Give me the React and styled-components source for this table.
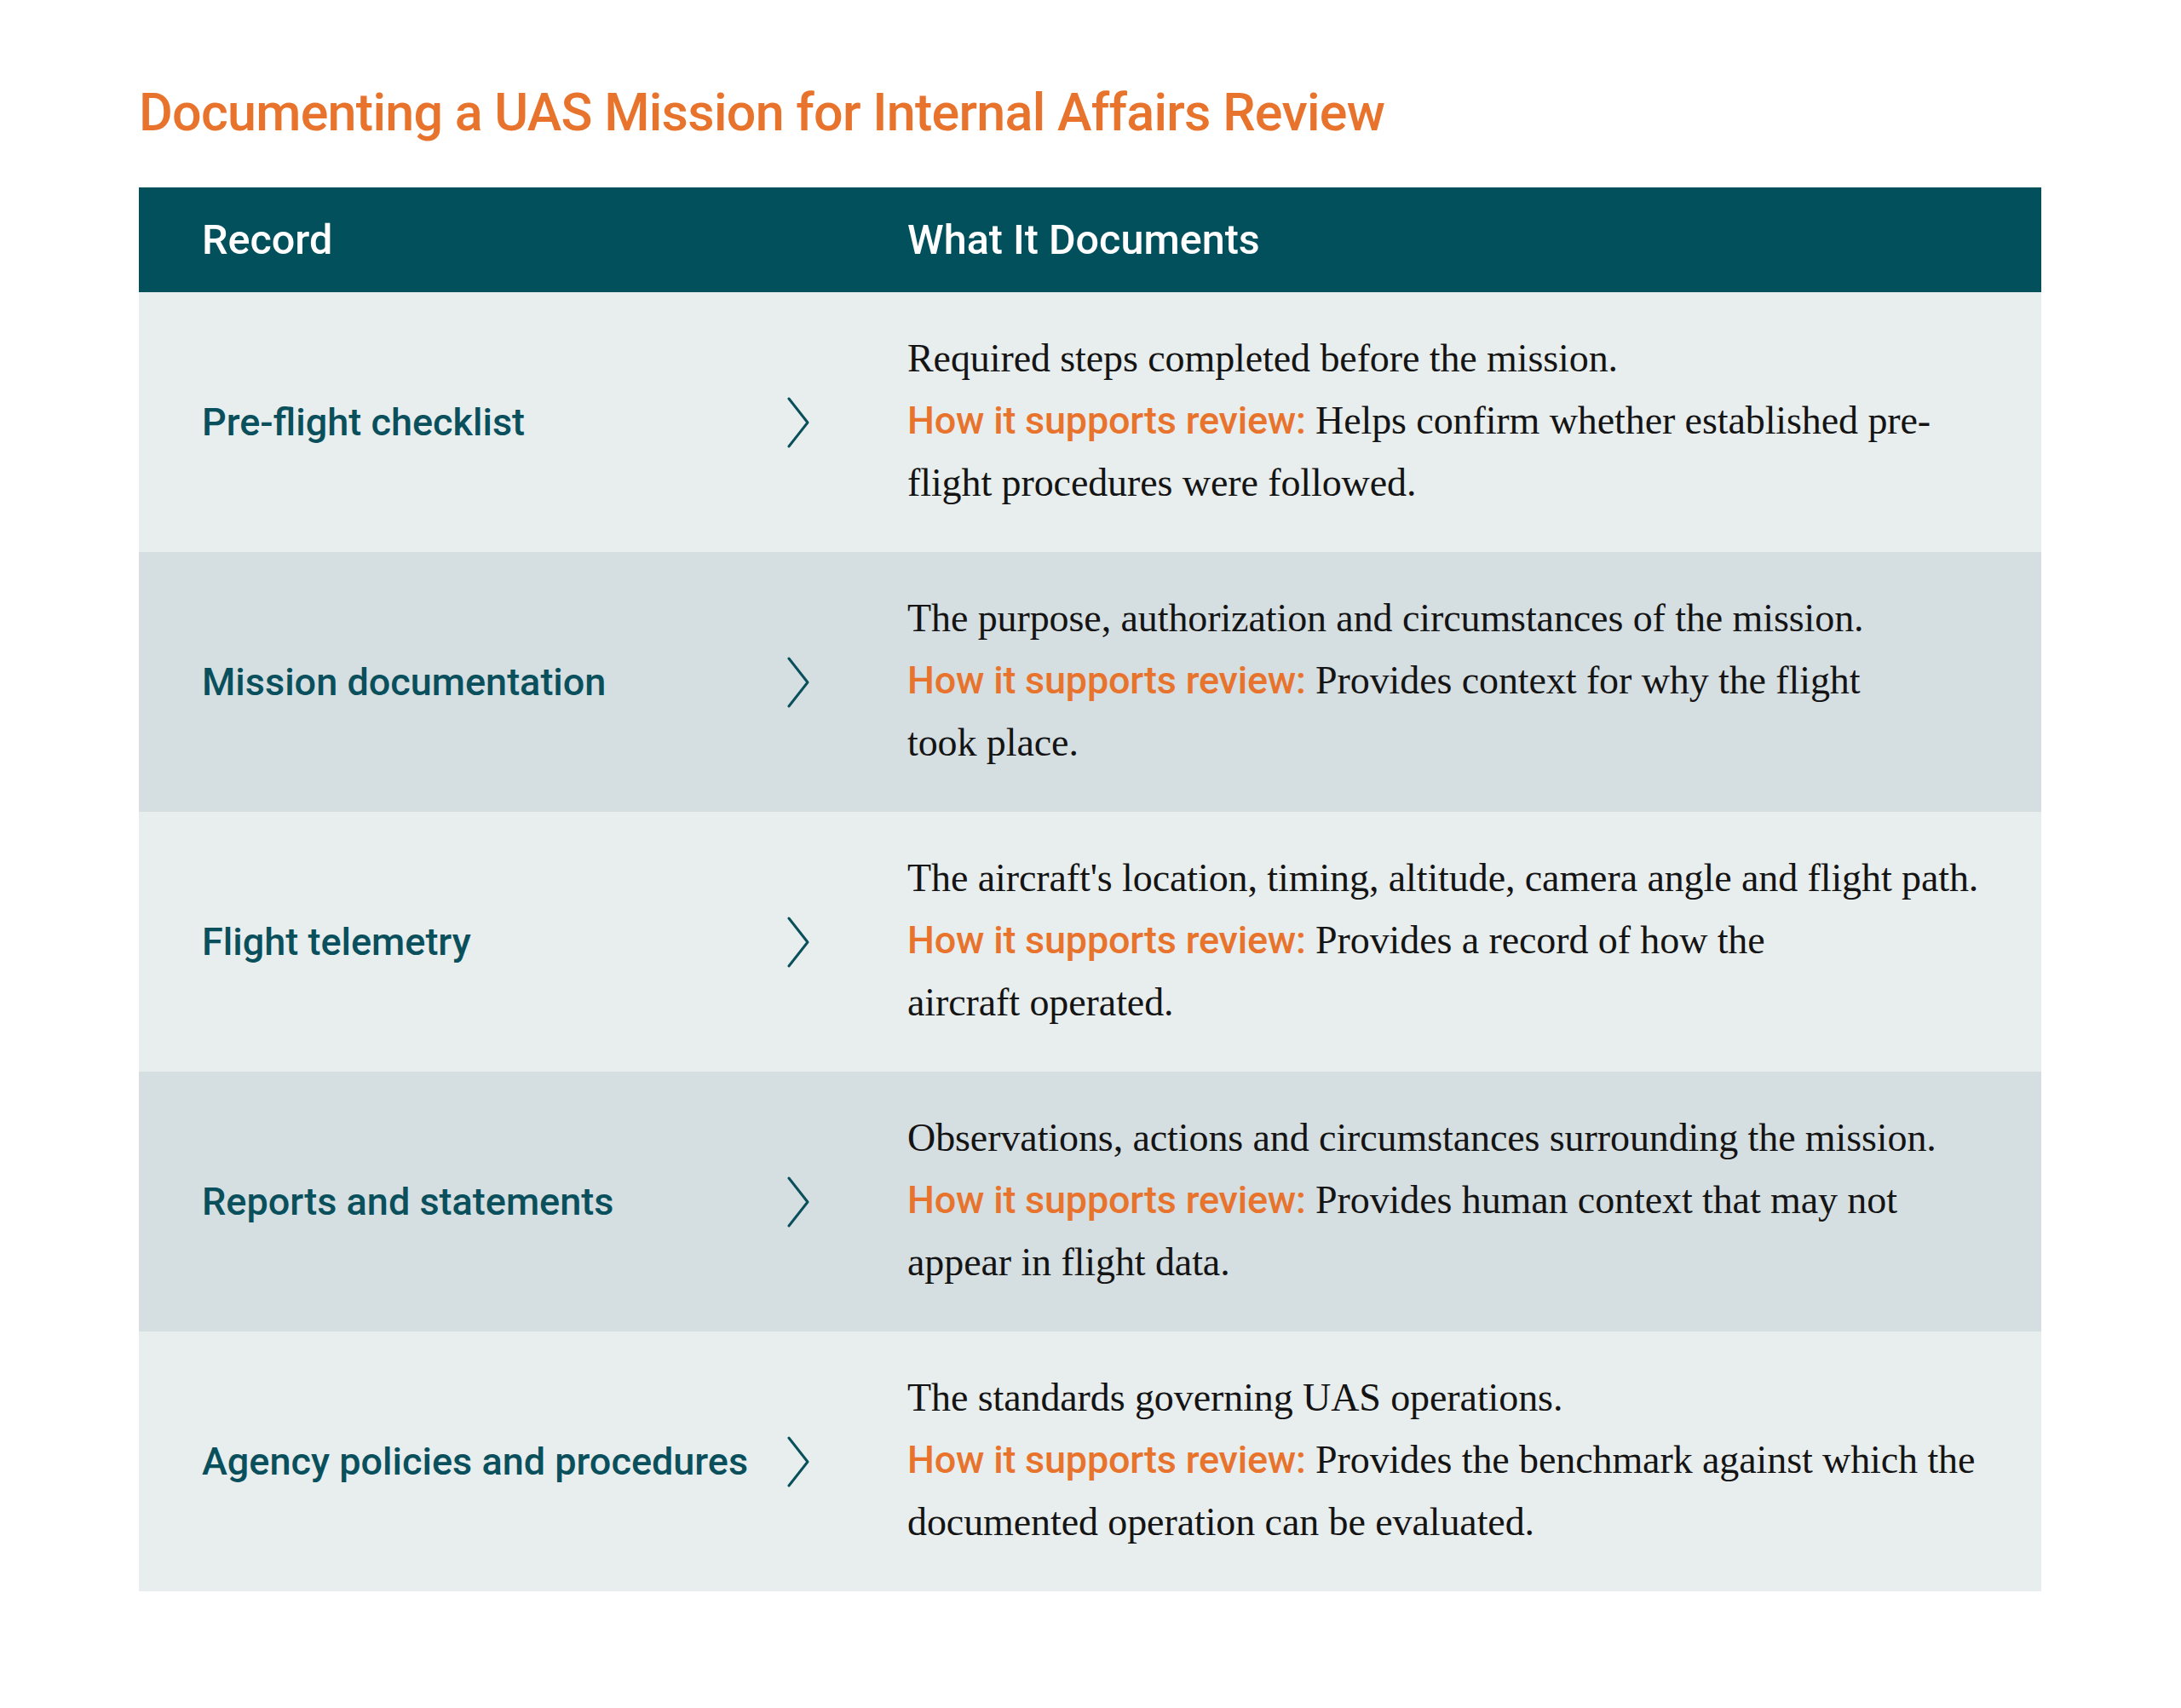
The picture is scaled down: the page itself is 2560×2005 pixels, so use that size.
import styled, { createGlobalStyle } from "styled-components";

const GlobalStyle = createGlobalStyle`
  html, body {
    margin: 0;
    padding: 0;
    background: #ffffff;
  }
  body {
    font-family: Roboto, "Liberation Sans", sans-serif;
  }
`;

const rows = [
  {
    record: "Pre-flight checklist",
    what: "Required steps completed before the mission.",
    support: ["Helps confirm whether established pre-", "flight procedures were followed."],
  },
  {
    record: "Mission documentation",
    what: "The purpose, authorization and circumstances of the mission.",
    support: ["Provides context for why the flight", "took place."],
  },
  {
    record: "Flight telemetry",
    what: "The aircraft's location, timing, altitude, camera angle and flight path.",
    support: ["Provides a record of how the", "aircraft operated."],
  },
  {
    record: "Reports and statements",
    what: "Observations, actions and circumstances surrounding the mission.",
    support: ["Provides human context that may not", "appear in flight data."],
  },
  {
    record: "Agency policies and procedures",
    what: "The standards governing UAS operations.",
    support: ["Provides the benchmark against which the", "documented operation can be evaluated."],
  },
];

const Page = styled.main`
  padding: 101px 164px 0 163px;
`;

const Title = styled.h1`
  margin: 0 0 57px;
  font-family: Roboto, "Liberation Sans", sans-serif;
  font-weight: 500;
  font-size: 61px;
  line-height: 62px;
  letter-spacing: -0.012em;
  color: #e8732c;
`;

const Table = styled.section`
  display: grid;
  grid-template-columns: 828px minmax(0, 1fr);
`;

const HeadCell = styled.div`
  height: 123px;
  display: flex;
  align-items: center;
  padding-left: 74px;
  background: #03505d;
  color: #ffffff;
  font-size: 48.5px;
  font-weight: 500;
`;

const RecordCell = styled.div`
  min-height: 305px;
  box-sizing: border-box;
  display: flex;
  align-items: center;
  justify-content: space-between;
  padding: 0 40px 0 74px;
  background: ${(p) => (p.$alt ? "#d5dee1" : "#e8eded")};
  color: #0a505c;
  font-size: 45px;
  font-weight: 500;
`;

const Chevron = styled.svg`
  width: 28px;
  height: 60px;
  flex-shrink: 0;
`;

const DocCell = styled.div`
  box-sizing: border-box;
  padding: 41px 74px 45px;
  background: ${(p) => (p.$alt ? "#d5dee1" : "#e8eded")};
  font-family: "Liberation Serif", "Times New Roman", serif;
  font-size: 46px;
  line-height: 73px;
  letter-spacing: -0.002em;
  color: #141414;
`;

const Line = styled.div`
  white-space: nowrap;
`;

const Lead = styled.span`
  font-family: Roboto, "Liberation Sans", sans-serif;
  font-weight: 500;
  font-size: 45px;
  letter-spacing: -0.005em;
  color: #e8732c;
`;

function ChevronIcon() {
  return (
    <Chevron viewBox="0 0 28 60" fill="none">
      <polyline
        points="3,2 25,30 3,58"
        stroke="#0a505c"
        strokeWidth="3"
        strokeLinecap="round"
        strokeLinejoin="round"
      />
    </Chevron>
  );
}

export default function App() {
  return (
    <>
      <GlobalStyle />
      <Page>
        <Title>Documenting a UAS Mission for Internal Affairs Review</Title>
        <Table>
          <HeadCell>Record</HeadCell>
          <HeadCell>What It Documents</HeadCell>
          {rows.map((row, i) => (
            <Row key={row.record} row={row} alt={i % 2 === 1} />
          ))}
        </Table>
      </Page>
    </>
  );
}

function Row({ row, alt }) {
  return (
    <>
      <RecordCell $alt={alt}>
        <span>{row.record}</span>
        <ChevronIcon />
      </RecordCell>
      <DocCell $alt={alt}>
        <Line>{row.what}</Line>
        <Line>
          <Lead>How it supports review:</Lead> {row.support[0]}
        </Line>
        <Line>{row.support[1]}</Line>
      </DocCell>
    </>
  );
}
